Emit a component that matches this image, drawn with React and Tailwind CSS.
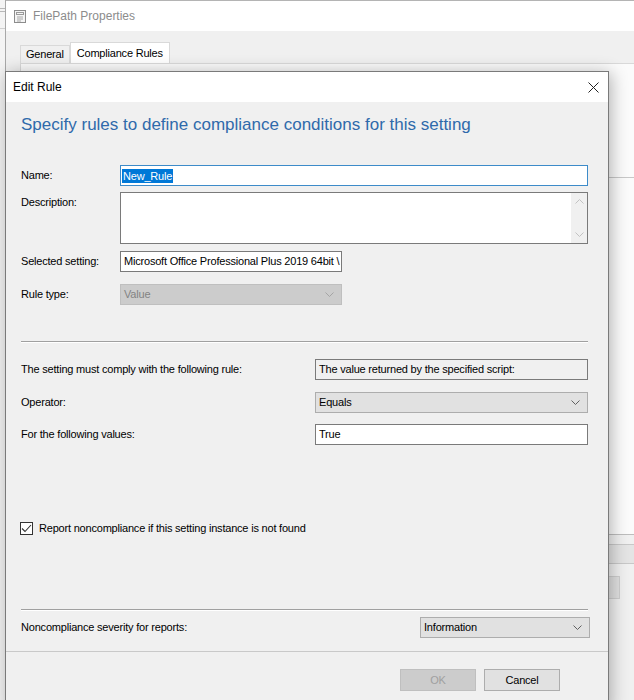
import React from "react";

// body text of the dialog: Segoe-like width with Liberation Sans
const txt = "text-[11px] tracking-[-0.2px]";

// small "v" arrow used in the combo boxes
function Chevron({ className = "" }) {
  return (
    <svg width="9" height="5" viewBox="0 0 9 5" className={className}>
      <path d="M0.5 0.5 L4.5 4.5 L8.5 0.5" fill="none" stroke="currentColor" strokeWidth="1" />
    </svg>
  );
}

function ChevronUp({ className = "" }) {
  return (
    <svg width="9" height="5" viewBox="0 0 9 5" className={className}>
      <path d="M0.5 4.5 L4.5 0.5 L8.5 4.5" fill="none" stroke="currentColor" strokeWidth="1" />
    </svg>
  );
}

function PropsIcon() {
  return (
    <svg width="14" height="15" viewBox="0 0 14 15">
      <rect x="1.5" y="1.5" width="11" height="12" fill="#f4f4f4" stroke="#8c8c8c" />
      <rect x="3.5" y="3.5" width="7" height="2" fill="none" stroke="#9a9a9a" />
      <path d="M4 8 H10 M4 10 H10 M4 12 H8" stroke="#a8a8a8" strokeWidth="1" />
    </svg>
  );
}

function Separator({ className = "" }) {
  return (
    <div className={className}>
      <div className="h-px bg-[#a0a0a0]" />
      <div className="h-px bg-white" />
    </div>
  );
}

function Label({ children, className = "" }) {
  return <div className={`w-[99px] shrink-0 leading-[15px] ${txt} ${className}`}>{children}</div>;
}

function Combo({ value, width, disabled }) {
  return (
    <div
      className={`h-[21px] ${width} flex items-center justify-between pl-[3px] pr-[7px] border ${
        disabled ? "bg-[#cccccc] border-[#bfbfbf] text-[#838383]" : "bg-[#e1e1e1] border-[#adadad] text-black"
      }`}
    >
      <span className={txt}>{value}</span>
      <Chevron className={disabled ? "text-[#a5a5a5]" : "text-[#606060]"} />
    </div>
  );
}

function EditRuleDialog() {
  return (
    <div className="absolute left-[5px] top-[71px] w-[604px] h-[640px] border border-[#7a7a7a] bg-[#f0f0f0] shadow-[2px_2px_16px_rgba(0,0,0,0.3)] flex flex-col">
      <div className="h-[30px] bg-white flex items-center justify-between pl-[7px] pr-[9px]">
        <span className="text-[12px] text-black">Edit Rule</span>
        <svg width="11" height="11" viewBox="0 0 11 11">
          <path d="M0.5 0.5 L10.5 10.5 M10.5 0.5 L0.5 10.5" stroke="#222" strokeWidth="1" />
        </svg>
      </div>

      <div className="flex flex-col pl-[15px] pr-[20px] pt-[13px]">
        <h1 className="text-[17px] leading-[20px] text-[#2f6aab]">
          Specify rules to define compliance conditions for this setting
        </h1>

        {/* Name */}
        <div className="flex items-center mt-[30px]">
          <Label>Name:</Label>
          <div className="flex-1 h-[21px] bg-white border border-[#3d8bc9] flex items-center pl-[1px]">
            <span className={`bg-[#0078d7] text-white leading-[14px] px-[1px] ${txt}`}>New_Rule</span>
          </div>
        </div>

        {/* Description */}
        <div className="flex items-start mt-[6px]">
          <Label className="pt-[3px]">Description:</Label>
          <div className="flex-1 h-[52px] bg-white border border-[#7a7a7a] flex justify-end">
            <div className="w-[16px] bg-[#f0f0f0] flex flex-col items-center justify-between py-[6px]">
              <ChevronUp className="text-[#c2c2c2]" />
              <Chevron className="text-[#c2c2c2]" />
            </div>
          </div>
        </div>

        {/* Selected setting */}
        <div className="flex items-center mt-[7px]">
          <Label>Selected setting:</Label>
          <div className="w-[222px] h-[21px] bg-white border border-[#7a7a7a] flex items-center pl-[3px] overflow-hidden whitespace-nowrap">
            <span className={txt}>Microsoft Office Professional Plus 2019 64bit \</span>
          </div>
        </div>

        {/* Rule type */}
        <div className="flex items-center mt-[12px]">
          <Label>Rule type:</Label>
          <Combo value="Value" width="w-[222px]" disabled />
        </div>

        <Separator className="mt-[36px]" />

        <div className="flex items-center justify-between mt-[16px]">
          <span className={txt}>The setting must comply with the following rule:</span>
          <div className="w-[273px] h-[21px] border border-[#7a7a7a] bg-[#f0f0f0] flex items-center pl-[3px]">
            <span className={txt}>The value returned by the specified script:</span>
          </div>
        </div>

        <div className="flex items-center justify-between mt-[12px]">
          <span className={txt}>Operator:</span>
          <Combo value="Equals" width="w-[273px]" />
        </div>

        <div className="flex items-center justify-between mt-[11px]">
          <span className={txt}>For the following values:</span>
          <div className="w-[273px] h-[21px] border border-[#7a7a7a] bg-white flex items-center pl-[3px]">
            <span className={txt}>True</span>
          </div>
        </div>

        {/* checkbox */}
        <div className="flex items-center gap-[6px] mt-[76px] -ml-px">
          <div className="w-[13px] h-[13px] border border-[#333] bg-white flex items-center justify-center">
            <svg width="11" height="9" viewBox="0 0 11 9">
              <path d="M1 4.5 L4 7.5 L10 1" fill="none" stroke="#333" strokeWidth="1.1" />
            </svg>
          </div>
          <span className={`leading-[15px] ${txt}`}>Report noncompliance if this setting instance is not found</span>
        </div>

        <Separator className="mt-[73px]" />

        <div className="flex items-center justify-between mt-[6px] -mr-[2px]">
          <span className={txt}>Noncompliance severity for reports:</span>
          <Combo value="Information" width="w-[170px]" />
        </div>
      </div>

      <div className="h-px bg-[#c9c9c9] mt-[13px]" />

      <div className="flex justify-end gap-[8px] pr-[48px] mt-[17px]">
        <div className={`w-[76px] h-[22px] bg-[#cccccc] border border-[#bfbfbf] flex items-center justify-center text-[#a0a0a0] ${txt}`}>
          OK
        </div>
        <div className={`w-[76px] h-[22px] bg-[#e1e1e1] border border-[#adadad] flex items-center justify-center ${txt}`}>
          Cancel
        </div>
      </div>
    </div>
  );
}

export default function App() {
  return (
    <div className="relative w-[634px] h-[700px] overflow-hidden bg-[#f0f0f0] font-['Liberation_Sans',Arial,sans-serif] text-black flex">
      {/* sliver of another window on the far left */}
      <div className="w-[5px] shrink-0 bg-[#f4f4f4] flex flex-col pt-[8px] gap-[2px]">
        <div className="h-px bg-[#b8b8b8]" />
        <div className="h-px bg-[#b8b8b8]" />
        <div className="h-px bg-[#d0d0d0] mt-[14px]" />
      </div>

      {/* FilePath Properties window behind */}
      <div className="flex-1 flex flex-col border-l border-[#a8a8a8]">
        <div className="h-[31px] bg-white border-t border-[#b4b4b4] flex items-center gap-[6px] pl-[7px]">
          <PropsIcon />
          <span className="text-[12px] text-[#8c8c8c]">FilePath Properties</span>
        </div>
        <div className="flex-1 flex flex-col pt-[11px] pl-[14px]">
          <div className="flex items-end h-[21px]">
            <div className={`h-[18px] px-[5px] border border-b-0 border-[#d9d9d9] bg-[#f0f0f0] flex items-center ${txt}`}>
              General
            </div>
            <div className={`h-[21px] px-[6px] border border-b-0 border-[#d9d9d9] bg-white flex items-center ${txt}`}>
              Compliance Rules
            </div>
          </div>
          <div className="h-[471px] bg-[#fbfbfb] border-t border-l border-[#d9d9d9] flex flex-col">
            <div className="h-[113px]" />
            <div className="h-px bg-[#c8c8c8]" />
          </div>
          <div className="h-px bg-[#bdbdbd]" />
          <div className="h-[9px]" />
          <div className="h-[20px] bg-[#e4e4e4] border-y border-[#c8c8c8]" />
          <div className="h-[12px]" />
          <div className="flex justify-end pr-[14px]">
            <div className={`w-[75px] h-[23px] bg-[#e1e1e1] border border-[#cfcfcf] flex items-center justify-center text-[#a0a0a0] ${txt}`}>
              Apply
            </div>
          </div>
        </div>
      </div>

      <EditRuleDialog />
    </div>
  );
}
